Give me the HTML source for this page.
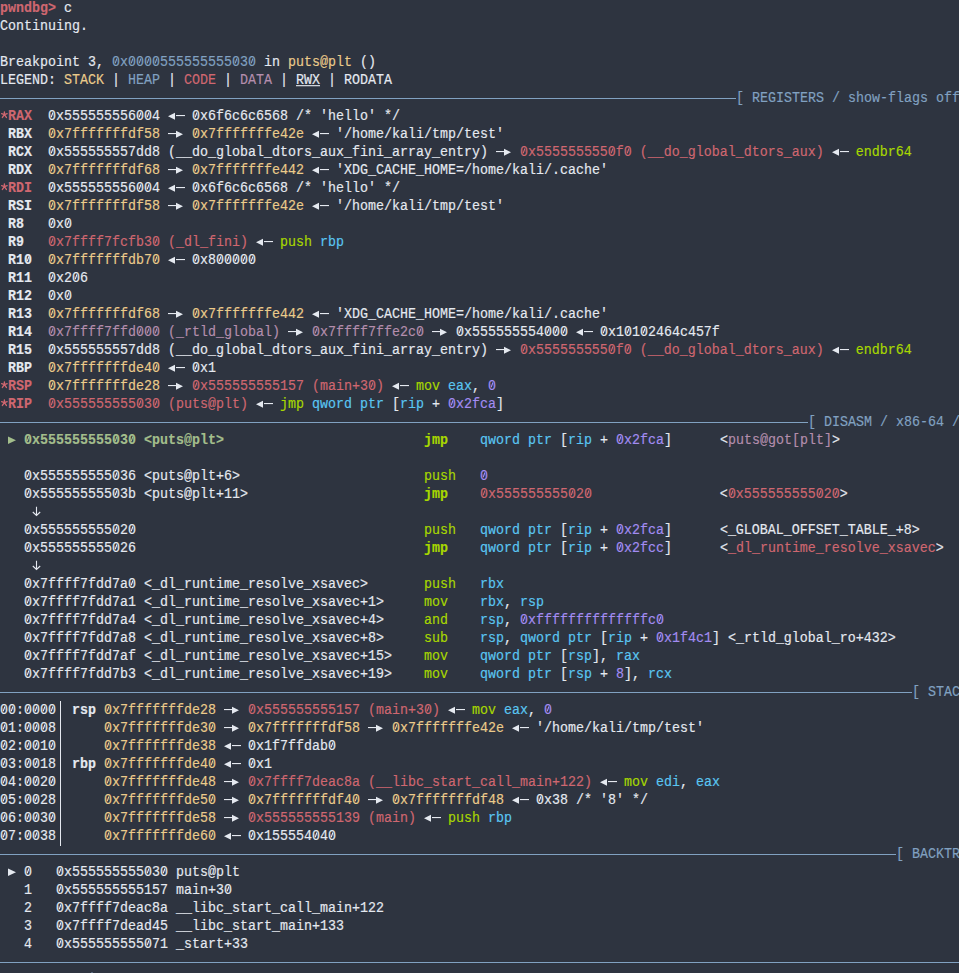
<!DOCTYPE html><html><head><meta charset="utf-8"><style>html,body{margin:0;padding:0;width:959px;height:973px;overflow:hidden;background:#2e3440;}
body{position:relative;-webkit-text-stroke:0.15px currentColor;font-family:"Liberation Mono",monospace;font-size:13.3333px;color:#e5e9f0;}
.ln{position:absolute;left:0;height:18px;line-height:18px;white-space:pre;transform:scaleY(1.12);transform-origin:0 12px;}
.ov{position:absolute;overflow:visible;}
.k{font-weight:bold}
.u{text-decoration:underline}
.hd{color:#81a1c1}
.rule{position:absolute;left:0;height:1px;background:#81a1c1;}
.vbar{position:absolute;left:60px;top:701px;width:1px;height:145px;background:#e5e9f0;}
.r{color:#cf6770}.y{color:#ebcb8b}.b{color:#81a1c1}.p{color:#b48ead}.g{color:#a3be8c}.l{color:#a8d800}.c{color:#5ac6f2}.v{color:#a38cf2}.w{color:#e5e9f0}</style></head><body><div class="ln" style="top:0px"><span class="k r">pwndbg&gt;</span> c</div>
<div class="ln" style="top:18px">Continuing.</div>
<div class="ln" style="top:54px">Breakpoint 3, <span class="b">0x0000555555555030</span> in <span class="y">puts@plt</span> ()</div>
<div class="ln" style="top:72px">LEGEND: <span class="y">STACK</span> | <span class="b">HEAP</span> | <span class="r">CODE</span> | <span class="p">DATA</span> | <span class="u">RWX</span> | RODATA</div>
<div class="ln" style="top:108px"><span class="k r"> RAX</span>  0x555555556004    0x6f6c6c6568 /* 'hello' */</div>
<div class="ln" style="top:126px"><span class="k w"> RBX</span>  <span class="y">0x7fffffffdf58</span>    <span class="y">0x7fffffffe42e</span>    '/home/kali/tmp/test'</div>
<div class="ln" style="top:144px"><span class="k w"> RCX</span>  0x555555557dd8 (__do_global_dtors_aux_fini_array_entry)    <span class="r">0x5555555550f0 (__do_global_dtors_aux)</span>    <span class="l">endbr64</span></div>
<div class="ln" style="top:162px"><span class="k w"> RDX</span>  <span class="y">0x7fffffffdf68</span>    <span class="y">0x7fffffffe442</span>    'XDG_CACHE_HOME=/home/kali/.cache'</div>
<div class="ln" style="top:180px"><span class="k r"> RDI</span>  0x555555556004    0x6f6c6c6568 /* 'hello' */</div>
<div class="ln" style="top:198px"><span class="k w"> RSI</span>  <span class="y">0x7fffffffdf58</span>    <span class="y">0x7fffffffe42e</span>    '/home/kali/tmp/test'</div>
<div class="ln" style="top:216px"><span class="k w"> R8 </span>  0x0</div>
<div class="ln" style="top:234px"><span class="k w"> R9 </span>  <span class="r">0x7ffff7fcfb30 (_dl_fini)</span>    <span class="l">push</span> <span class="c">rbp</span></div>
<div class="ln" style="top:252px"><span class="k w"> R10</span>  <span class="y">0x7fffffffdb70</span>    0x800000</div>
<div class="ln" style="top:270px"><span class="k w"> R11</span>  0x206</div>
<div class="ln" style="top:288px"><span class="k w"> R12</span>  0x0</div>
<div class="ln" style="top:306px"><span class="k w"> R13</span>  <span class="y">0x7fffffffdf68</span>    <span class="y">0x7fffffffe442</span>    'XDG_CACHE_HOME=/home/kali/.cache'</div>
<div class="ln" style="top:324px"><span class="k w"> R14</span>  <span class="p">0x7ffff7ffd000 (_rtld_global)</span>    <span class="p">0x7ffff7ffe2c0</span>    0x555555554000    0x10102464c457f</div>
<div class="ln" style="top:342px"><span class="k w"> R15</span>  0x555555557dd8 (__do_global_dtors_aux_fini_array_entry)    <span class="r">0x5555555550f0 (__do_global_dtors_aux)</span>    <span class="l">endbr64</span></div>
<div class="ln" style="top:360px"><span class="k w"> RBP</span>  <span class="y">0x7fffffffde40</span>    0x1</div>
<div class="ln" style="top:378px"><span class="k r"> RSP</span>  <span class="y">0x7fffffffde28</span>    <span class="r">0x555555555157 (main+30)</span>    <span class="l">mov</span> <span class="c">eax</span>, <span class="v">0</span></div>
<div class="ln" style="top:396px"><span class="k r"> RIP</span>  <span class="r">0x555555555030 (puts@plt)</span>    <span class="l">jmp</span> <span class="c">qword ptr</span> [<span class="c">rip</span> + <span class="v">0x2fca</span>]</div>
<div class="ln" style="top:432px"> <span class="g"> </span> <span class="k g">0x555555555030 &lt;puts@plt&gt;</span>                         <span class="k l">jmp</span>    <span class="c">qword ptr</span> [<span class="c">rip</span> + <span class="v">0x2fca</span>]      &lt;<span class="p">puts@got[plt]</span>&gt;</div>
<div class="ln" style="top:468px">   0x555555555036 &lt;puts@plt+6&gt;                       <span class="l">push</span>   <span class="v">0</span></div>
<div class="ln" style="top:486px">   0x55555555503b &lt;puts@plt+11&gt;                      <span class="k l">jmp</span>    <span class="r">0x555555555020</span>                &lt;<span class="r">0x555555555020</span>&gt;</div>
<div class="ln" style="top:504px">     </div>
<div class="ln" style="top:522px">   0x555555555020                                    <span class="l">push</span>   <span class="c">qword ptr</span> [<span class="c">rip</span> + <span class="v">0x2fca</span>]      &lt;_GLOBAL_OFFSET_TABLE_+8&gt;</div>
<div class="ln" style="top:540px">   0x555555555026                                    <span class="k l">jmp</span>    <span class="c">qword ptr</span> [<span class="c">rip</span> + <span class="v">0x2fcc</span>]      &lt;<span class="r">_dl_runtime_resolve_xsavec</span>&gt;</div>
<div class="ln" style="top:558px">     </div>
<div class="ln" style="top:576px">   0x7ffff7fdd7a0 &lt;_dl_runtime_resolve_xsavec&gt;       <span class="l">push</span>   <span class="c">rbx</span></div>
<div class="ln" style="top:594px">   0x7ffff7fdd7a1 &lt;_dl_runtime_resolve_xsavec+1&gt;     <span class="l">mov</span>    <span class="c">rbx</span>, <span class="c">rsp</span></div>
<div class="ln" style="top:612px">   0x7ffff7fdd7a4 &lt;_dl_runtime_resolve_xsavec+4&gt;     <span class="l">and</span>    <span class="c">rsp</span>, <span class="v">0xffffffffffffffc0</span></div>
<div class="ln" style="top:630px">   0x7ffff7fdd7a8 &lt;_dl_runtime_resolve_xsavec+8&gt;     <span class="l">sub</span>    <span class="c">rsp</span>, <span class="c">qword ptr</span> [<span class="c">rip</span> + <span class="v">0x1f4c1</span>] &lt;_rtld_global_ro+432&gt;</div>
<div class="ln" style="top:648px">   0x7ffff7fdd7af &lt;_dl_runtime_resolve_xsavec+15&gt;    <span class="l">mov</span>    <span class="c">qword ptr</span> [<span class="c">rsp</span>], <span class="c">rax</span></div>
<div class="ln" style="top:666px">   0x7ffff7fdd7b3 &lt;_dl_runtime_resolve_xsavec+19&gt;    <span class="l">mov</span>    <span class="c">qword ptr</span> [<span class="c">rsp</span> + <span class="v">8</span>], <span class="c">rcx</span></div>
<div class="ln" style="top:702px">00:0000  <span class="k w">rsp</span> <span class="y">0x7fffffffde28</span>    <span class="r">0x555555555157 (main+30)</span>    <span class="l">mov</span> <span class="c">eax</span>, <span class="v">0</span></div>
<div class="ln" style="top:720px">01:0008      <span class="y">0x7fffffffde30</span>    <span class="y">0x7fffffffdf58</span>    <span class="y">0x7fffffffe42e</span>    '/home/kali/tmp/test'</div>
<div class="ln" style="top:738px">02:0010      <span class="y">0x7fffffffde38</span>    0x1f7ffdab0</div>
<div class="ln" style="top:756px">03:0018  <span class="k w">rbp</span> <span class="y">0x7fffffffde40</span>    0x1</div>
<div class="ln" style="top:774px">04:0020      <span class="y">0x7fffffffde48</span>    <span class="r">0x7ffff7deac8a (__libc_start_call_main+122)</span>    <span class="l">mov</span> <span class="c">edi</span>, <span class="c">eax</span></div>
<div class="ln" style="top:792px">05:0028      <span class="y">0x7fffffffde50</span>    <span class="y">0x7fffffffdf40</span>    <span class="y">0x7fffffffdf48</span>    0x38 /* '8' */</div>
<div class="ln" style="top:810px">06:0030      <span class="y">0x7fffffffde58</span>    <span class="r">0x555555555139 (main)</span>    <span class="l">push</span> <span class="c">rbp</span></div>
<div class="ln" style="top:828px">07:0038      <span class="y">0x7fffffffde60</span>    0x155554040</div>
<div class="ln" style="top:864px">   0   0x555555555030 puts@plt</div>
<div class="ln" style="top:882px">   1   0x555555555157 main+30</div>
<div class="ln" style="top:900px">   2   0x7ffff7deac8a __libc_start_call_main+122</div>
<div class="ln" style="top:918px">   3   0x7ffff7dead45 __libc_start_main+133</div>
<div class="ln" style="top:936px">   4   0x555555555071 _start+33</div>
<div class="rule" style="top:98px;width:736px"></div>
<div class="ln hd" style="top:90px;left:736px">[ REGISTERS / show-flags off / show-compact-regs off ]</div>
<div class="rule" style="top:422px;width:808px"></div>
<div class="ln hd" style="top:414px;left:808px">[ DISASM / x86-64 / set emulate on ]</div>
<div class="rule" style="top:692px;width:912px"></div>
<div class="ln hd" style="top:684px;left:912px">[ STACK ]</div>
<div class="rule" style="top:854px;width:896px"></div>
<div class="ln hd" style="top:846px;left:896px">[ BACKTRACE ]</div>
<div class="rule" style="top:962px;width:959px"></div>
<div class="vbar"></div>
<svg class="ov" style="left:0px;top:108px" width="8" height="18" viewBox="0 0 8 18"><path d="M4.4 6.7 L4.4 3.9 M4.4 6.7 L7.15 5.65 M4.4 6.7 L1.65 5.65 M4.4 6.7 L6.4 9.45 M4.4 6.7 L2.4 9.45" stroke="#cf6770" stroke-width="1.4" stroke-linecap="round" fill="none"/></svg>
<svg class="ov" style="left:168px;top:108px" width="16" height="18" viewBox="0 0 16 18"><path d="M0 8.3 L7 4.8 L7 11.8 Z" fill="#e5e9f0"/><rect x="8" y="7.0" width="9" height="1.1" fill="#e5e9f0"/></svg>
<svg class="ov" style="left:168px;top:126px" width="16" height="18" viewBox="0 0 16 18"><rect x="0" y="7.0" width="8" height="1.1" fill="#e5e9f0"/><path d="M15 8.2 L8 4.7 L8 11.7 Z" fill="#e5e9f0"/></svg>
<svg class="ov" style="left:312px;top:126px" width="16" height="18" viewBox="0 0 16 18"><path d="M0 8.3 L7 4.8 L7 11.8 Z" fill="#e5e9f0"/><rect x="8" y="7.0" width="9" height="1.1" fill="#e5e9f0"/></svg>
<svg class="ov" style="left:496px;top:144px" width="16" height="18" viewBox="0 0 16 18"><rect x="0" y="7.0" width="8" height="1.1" fill="#e5e9f0"/><path d="M15 8.2 L8 4.7 L8 11.7 Z" fill="#e5e9f0"/></svg>
<svg class="ov" style="left:832px;top:144px" width="16" height="18" viewBox="0 0 16 18"><path d="M0 8.3 L7 4.8 L7 11.8 Z" fill="#e5e9f0"/><rect x="8" y="7.0" width="9" height="1.1" fill="#e5e9f0"/></svg>
<svg class="ov" style="left:168px;top:162px" width="16" height="18" viewBox="0 0 16 18"><rect x="0" y="7.0" width="8" height="1.1" fill="#e5e9f0"/><path d="M15 8.2 L8 4.7 L8 11.7 Z" fill="#e5e9f0"/></svg>
<svg class="ov" style="left:312px;top:162px" width="16" height="18" viewBox="0 0 16 18"><path d="M0 8.3 L7 4.8 L7 11.8 Z" fill="#e5e9f0"/><rect x="8" y="7.0" width="9" height="1.1" fill="#e5e9f0"/></svg>
<svg class="ov" style="left:0px;top:180px" width="8" height="18" viewBox="0 0 8 18"><path d="M4.4 6.7 L4.4 3.9 M4.4 6.7 L7.15 5.65 M4.4 6.7 L1.65 5.65 M4.4 6.7 L6.4 9.45 M4.4 6.7 L2.4 9.45" stroke="#cf6770" stroke-width="1.4" stroke-linecap="round" fill="none"/></svg>
<svg class="ov" style="left:168px;top:180px" width="16" height="18" viewBox="0 0 16 18"><path d="M0 8.3 L7 4.8 L7 11.8 Z" fill="#e5e9f0"/><rect x="8" y="7.0" width="9" height="1.1" fill="#e5e9f0"/></svg>
<svg class="ov" style="left:168px;top:198px" width="16" height="18" viewBox="0 0 16 18"><rect x="0" y="7.0" width="8" height="1.1" fill="#e5e9f0"/><path d="M15 8.2 L8 4.7 L8 11.7 Z" fill="#e5e9f0"/></svg>
<svg class="ov" style="left:312px;top:198px" width="16" height="18" viewBox="0 0 16 18"><path d="M0 8.3 L7 4.8 L7 11.8 Z" fill="#e5e9f0"/><rect x="8" y="7.0" width="9" height="1.1" fill="#e5e9f0"/></svg>
<svg class="ov" style="left:256px;top:234px" width="16" height="18" viewBox="0 0 16 18"><path d="M0 8.3 L7 4.8 L7 11.8 Z" fill="#e5e9f0"/><rect x="8" y="7.0" width="9" height="1.1" fill="#e5e9f0"/></svg>
<svg class="ov" style="left:168px;top:252px" width="16" height="18" viewBox="0 0 16 18"><path d="M0 8.3 L7 4.8 L7 11.8 Z" fill="#e5e9f0"/><rect x="8" y="7.0" width="9" height="1.1" fill="#e5e9f0"/></svg>
<svg class="ov" style="left:168px;top:306px" width="16" height="18" viewBox="0 0 16 18"><rect x="0" y="7.0" width="8" height="1.1" fill="#e5e9f0"/><path d="M15 8.2 L8 4.7 L8 11.7 Z" fill="#e5e9f0"/></svg>
<svg class="ov" style="left:312px;top:306px" width="16" height="18" viewBox="0 0 16 18"><path d="M0 8.3 L7 4.8 L7 11.8 Z" fill="#e5e9f0"/><rect x="8" y="7.0" width="9" height="1.1" fill="#e5e9f0"/></svg>
<svg class="ov" style="left:288px;top:324px" width="16" height="18" viewBox="0 0 16 18"><rect x="0" y="7.0" width="8" height="1.1" fill="#e5e9f0"/><path d="M15 8.2 L8 4.7 L8 11.7 Z" fill="#e5e9f0"/></svg>
<svg class="ov" style="left:432px;top:324px" width="16" height="18" viewBox="0 0 16 18"><rect x="0" y="7.0" width="8" height="1.1" fill="#e5e9f0"/><path d="M15 8.2 L8 4.7 L8 11.7 Z" fill="#e5e9f0"/></svg>
<svg class="ov" style="left:576px;top:324px" width="16" height="18" viewBox="0 0 16 18"><path d="M0 8.3 L7 4.8 L7 11.8 Z" fill="#e5e9f0"/><rect x="8" y="7.0" width="9" height="1.1" fill="#e5e9f0"/></svg>
<svg class="ov" style="left:496px;top:342px" width="16" height="18" viewBox="0 0 16 18"><rect x="0" y="7.0" width="8" height="1.1" fill="#e5e9f0"/><path d="M15 8.2 L8 4.7 L8 11.7 Z" fill="#e5e9f0"/></svg>
<svg class="ov" style="left:832px;top:342px" width="16" height="18" viewBox="0 0 16 18"><path d="M0 8.3 L7 4.8 L7 11.8 Z" fill="#e5e9f0"/><rect x="8" y="7.0" width="9" height="1.1" fill="#e5e9f0"/></svg>
<svg class="ov" style="left:168px;top:360px" width="16" height="18" viewBox="0 0 16 18"><path d="M0 8.3 L7 4.8 L7 11.8 Z" fill="#e5e9f0"/><rect x="8" y="7.0" width="9" height="1.1" fill="#e5e9f0"/></svg>
<svg class="ov" style="left:0px;top:378px" width="8" height="18" viewBox="0 0 8 18"><path d="M4.4 6.7 L4.4 3.9 M4.4 6.7 L7.15 5.65 M4.4 6.7 L1.65 5.65 M4.4 6.7 L6.4 9.45 M4.4 6.7 L2.4 9.45" stroke="#cf6770" stroke-width="1.4" stroke-linecap="round" fill="none"/></svg>
<svg class="ov" style="left:168px;top:378px" width="16" height="18" viewBox="0 0 16 18"><rect x="0" y="7.0" width="8" height="1.1" fill="#e5e9f0"/><path d="M15 8.2 L8 4.7 L8 11.7 Z" fill="#e5e9f0"/></svg>
<svg class="ov" style="left:392px;top:378px" width="16" height="18" viewBox="0 0 16 18"><path d="M0 8.3 L7 4.8 L7 11.8 Z" fill="#e5e9f0"/><rect x="8" y="7.0" width="9" height="1.1" fill="#e5e9f0"/></svg>
<svg class="ov" style="left:0px;top:396px" width="8" height="18" viewBox="0 0 8 18"><path d="M4.4 6.7 L4.4 3.9 M4.4 6.7 L7.15 5.65 M4.4 6.7 L1.65 5.65 M4.4 6.7 L6.4 9.45 M4.4 6.7 L2.4 9.45" stroke="#cf6770" stroke-width="1.4" stroke-linecap="round" fill="none"/></svg>
<svg class="ov" style="left:256px;top:396px" width="16" height="18" viewBox="0 0 16 18"><path d="M0 8.3 L7 4.8 L7 11.8 Z" fill="#e5e9f0"/><rect x="8" y="7.0" width="9" height="1.1" fill="#e5e9f0"/></svg>
<svg class="ov" style="left:8px;top:432px" width="8" height="18" viewBox="0 0 8 18"><path d="M0 4.5 L8 8.25 L0 12 Z" fill="#a3be8c"/></svg>
<svg class="ov" style="left:32px;top:504px" width="8" height="18" viewBox="0 0 8 18"><path d="M4.5 2.7 V11.2 M0.8 8.0 L4.5 11.4 L8.2 8.0" stroke="#e5e9f0" stroke-width="1.1" fill="none"/></svg>
<svg class="ov" style="left:32px;top:558px" width="8" height="18" viewBox="0 0 8 18"><path d="M4.5 2.7 V11.2 M0.8 8.0 L4.5 11.4 L8.2 8.0" stroke="#e5e9f0" stroke-width="1.1" fill="none"/></svg>
<svg class="ov" style="left:224px;top:702px" width="16" height="18" viewBox="0 0 16 18"><rect x="0" y="7.0" width="8" height="1.1" fill="#e5e9f0"/><path d="M15 8.2 L8 4.7 L8 11.7 Z" fill="#e5e9f0"/></svg>
<svg class="ov" style="left:448px;top:702px" width="16" height="18" viewBox="0 0 16 18"><path d="M0 8.3 L7 4.8 L7 11.8 Z" fill="#e5e9f0"/><rect x="8" y="7.0" width="9" height="1.1" fill="#e5e9f0"/></svg>
<svg class="ov" style="left:224px;top:720px" width="16" height="18" viewBox="0 0 16 18"><rect x="0" y="7.0" width="8" height="1.1" fill="#e5e9f0"/><path d="M15 8.2 L8 4.7 L8 11.7 Z" fill="#e5e9f0"/></svg>
<svg class="ov" style="left:368px;top:720px" width="16" height="18" viewBox="0 0 16 18"><rect x="0" y="7.0" width="8" height="1.1" fill="#e5e9f0"/><path d="M15 8.2 L8 4.7 L8 11.7 Z" fill="#e5e9f0"/></svg>
<svg class="ov" style="left:512px;top:720px" width="16" height="18" viewBox="0 0 16 18"><path d="M0 8.3 L7 4.8 L7 11.8 Z" fill="#e5e9f0"/><rect x="8" y="7.0" width="9" height="1.1" fill="#e5e9f0"/></svg>
<svg class="ov" style="left:224px;top:738px" width="16" height="18" viewBox="0 0 16 18"><path d="M0 8.3 L7 4.8 L7 11.8 Z" fill="#e5e9f0"/><rect x="8" y="7.0" width="9" height="1.1" fill="#e5e9f0"/></svg>
<svg class="ov" style="left:224px;top:756px" width="16" height="18" viewBox="0 0 16 18"><path d="M0 8.3 L7 4.8 L7 11.8 Z" fill="#e5e9f0"/><rect x="8" y="7.0" width="9" height="1.1" fill="#e5e9f0"/></svg>
<svg class="ov" style="left:224px;top:774px" width="16" height="18" viewBox="0 0 16 18"><rect x="0" y="7.0" width="8" height="1.1" fill="#e5e9f0"/><path d="M15 8.2 L8 4.7 L8 11.7 Z" fill="#e5e9f0"/></svg>
<svg class="ov" style="left:600px;top:774px" width="16" height="18" viewBox="0 0 16 18"><path d="M0 8.3 L7 4.8 L7 11.8 Z" fill="#e5e9f0"/><rect x="8" y="7.0" width="9" height="1.1" fill="#e5e9f0"/></svg>
<svg class="ov" style="left:224px;top:792px" width="16" height="18" viewBox="0 0 16 18"><rect x="0" y="7.0" width="8" height="1.1" fill="#e5e9f0"/><path d="M15 8.2 L8 4.7 L8 11.7 Z" fill="#e5e9f0"/></svg>
<svg class="ov" style="left:368px;top:792px" width="16" height="18" viewBox="0 0 16 18"><rect x="0" y="7.0" width="8" height="1.1" fill="#e5e9f0"/><path d="M15 8.2 L8 4.7 L8 11.7 Z" fill="#e5e9f0"/></svg>
<svg class="ov" style="left:512px;top:792px" width="16" height="18" viewBox="0 0 16 18"><path d="M0 8.3 L7 4.8 L7 11.8 Z" fill="#e5e9f0"/><rect x="8" y="7.0" width="9" height="1.1" fill="#e5e9f0"/></svg>
<svg class="ov" style="left:224px;top:810px" width="16" height="18" viewBox="0 0 16 18"><rect x="0" y="7.0" width="8" height="1.1" fill="#e5e9f0"/><path d="M15 8.2 L8 4.7 L8 11.7 Z" fill="#e5e9f0"/></svg>
<svg class="ov" style="left:424px;top:810px" width="16" height="18" viewBox="0 0 16 18"><path d="M0 8.3 L7 4.8 L7 11.8 Z" fill="#e5e9f0"/><rect x="8" y="7.0" width="9" height="1.1" fill="#e5e9f0"/></svg>
<svg class="ov" style="left:224px;top:828px" width="16" height="18" viewBox="0 0 16 18"><path d="M0 8.3 L7 4.8 L7 11.8 Z" fill="#e5e9f0"/><rect x="8" y="7.0" width="9" height="1.1" fill="#e5e9f0"/></svg>
<svg class="ov" style="left:8px;top:864px" width="8" height="18" viewBox="0 0 8 18"><path d="M0 4.5 L8 8.25 L0 12 Z" fill="#e5e9f0"/></svg>
<svg class="ov" style="left:112px;top:54px" width="8" height="18" viewBox="0 0 8 18"><rect x="3" y="6" width="2" height="2" fill="#2e3440"/><path d="M3.2 9.2 L4.9 4.5" stroke="#81a1c1" stroke-width="1.15" fill="none"/></svg>
<svg class="ov" style="left:128px;top:54px" width="8" height="18" viewBox="0 0 8 18"><rect x="3" y="6" width="2" height="2" fill="#2e3440"/><path d="M3.2 9.2 L4.9 4.5" stroke="#81a1c1" stroke-width="1.15" fill="none"/></svg>
<svg class="ov" style="left:136px;top:54px" width="8" height="18" viewBox="0 0 8 18"><rect x="3" y="6" width="2" height="2" fill="#2e3440"/><path d="M3.2 9.2 L4.9 4.5" stroke="#81a1c1" stroke-width="1.15" fill="none"/></svg>
<svg class="ov" style="left:144px;top:54px" width="8" height="18" viewBox="0 0 8 18"><rect x="3" y="6" width="2" height="2" fill="#2e3440"/><path d="M3.2 9.2 L4.9 4.5" stroke="#81a1c1" stroke-width="1.15" fill="none"/></svg>
<svg class="ov" style="left:152px;top:54px" width="8" height="18" viewBox="0 0 8 18"><rect x="3" y="6" width="2" height="2" fill="#2e3440"/><path d="M3.2 9.2 L4.9 4.5" stroke="#81a1c1" stroke-width="1.15" fill="none"/></svg>
<svg class="ov" style="left:232px;top:54px" width="8" height="18" viewBox="0 0 8 18"><rect x="3" y="6" width="2" height="2" fill="#2e3440"/><path d="M3.2 9.2 L4.9 4.5" stroke="#81a1c1" stroke-width="1.15" fill="none"/></svg>
<svg class="ov" style="left:248px;top:54px" width="8" height="18" viewBox="0 0 8 18"><rect x="3" y="6" width="2" height="2" fill="#2e3440"/><path d="M3.2 9.2 L4.9 4.5" stroke="#81a1c1" stroke-width="1.15" fill="none"/></svg>
<svg class="ov" style="left:48px;top:108px" width="8" height="18" viewBox="0 0 8 18"><rect x="3" y="6" width="2" height="2" fill="#2e3440"/><path d="M3.2 9.2 L4.9 4.5" stroke="#e5e9f0" stroke-width="1.15" fill="none"/></svg>
<svg class="ov" style="left:136px;top:108px" width="8" height="18" viewBox="0 0 8 18"><rect x="3" y="6" width="2" height="2" fill="#2e3440"/><path d="M3.2 9.2 L4.9 4.5" stroke="#e5e9f0" stroke-width="1.15" fill="none"/></svg>
<svg class="ov" style="left:144px;top:108px" width="8" height="18" viewBox="0 0 8 18"><rect x="3" y="6" width="2" height="2" fill="#2e3440"/><path d="M3.2 9.2 L4.9 4.5" stroke="#e5e9f0" stroke-width="1.15" fill="none"/></svg>
<svg class="ov" style="left:192px;top:108px" width="8" height="18" viewBox="0 0 8 18"><rect x="3" y="6" width="2" height="2" fill="#2e3440"/><path d="M3.2 9.2 L4.9 4.5" stroke="#e5e9f0" stroke-width="1.15" fill="none"/></svg>
<svg class="ov" style="left:48px;top:126px" width="8" height="18" viewBox="0 0 8 18"><rect x="3" y="6" width="2" height="2" fill="#2e3440"/><path d="M3.2 9.2 L4.9 4.5" stroke="#ebcb8b" stroke-width="1.15" fill="none"/></svg>
<svg class="ov" style="left:192px;top:126px" width="8" height="18" viewBox="0 0 8 18"><rect x="3" y="6" width="2" height="2" fill="#2e3440"/><path d="M3.2 9.2 L4.9 4.5" stroke="#ebcb8b" stroke-width="1.15" fill="none"/></svg>
<svg class="ov" style="left:48px;top:144px" width="8" height="18" viewBox="0 0 8 18"><rect x="3" y="6" width="2" height="2" fill="#2e3440"/><path d="M3.2 9.2 L4.9 4.5" stroke="#e5e9f0" stroke-width="1.15" fill="none"/></svg>
<svg class="ov" style="left:520px;top:144px" width="8" height="18" viewBox="0 0 8 18"><rect x="3" y="6" width="2" height="2" fill="#2e3440"/><path d="M3.2 9.2 L4.9 4.5" stroke="#cf6770" stroke-width="1.15" fill="none"/></svg>
<svg class="ov" style="left:608px;top:144px" width="8" height="18" viewBox="0 0 8 18"><rect x="3" y="6" width="2" height="2" fill="#2e3440"/><path d="M3.2 9.2 L4.9 4.5" stroke="#cf6770" stroke-width="1.15" fill="none"/></svg>
<svg class="ov" style="left:624px;top:144px" width="8" height="18" viewBox="0 0 8 18"><rect x="3" y="6" width="2" height="2" fill="#2e3440"/><path d="M3.2 9.2 L4.9 4.5" stroke="#cf6770" stroke-width="1.15" fill="none"/></svg>
<svg class="ov" style="left:48px;top:162px" width="8" height="18" viewBox="0 0 8 18"><rect x="3" y="6" width="2" height="2" fill="#2e3440"/><path d="M3.2 9.2 L4.9 4.5" stroke="#ebcb8b" stroke-width="1.15" fill="none"/></svg>
<svg class="ov" style="left:192px;top:162px" width="8" height="18" viewBox="0 0 8 18"><rect x="3" y="6" width="2" height="2" fill="#2e3440"/><path d="M3.2 9.2 L4.9 4.5" stroke="#ebcb8b" stroke-width="1.15" fill="none"/></svg>
<svg class="ov" style="left:48px;top:180px" width="8" height="18" viewBox="0 0 8 18"><rect x="3" y="6" width="2" height="2" fill="#2e3440"/><path d="M3.2 9.2 L4.9 4.5" stroke="#e5e9f0" stroke-width="1.15" fill="none"/></svg>
<svg class="ov" style="left:136px;top:180px" width="8" height="18" viewBox="0 0 8 18"><rect x="3" y="6" width="2" height="2" fill="#2e3440"/><path d="M3.2 9.2 L4.9 4.5" stroke="#e5e9f0" stroke-width="1.15" fill="none"/></svg>
<svg class="ov" style="left:144px;top:180px" width="8" height="18" viewBox="0 0 8 18"><rect x="3" y="6" width="2" height="2" fill="#2e3440"/><path d="M3.2 9.2 L4.9 4.5" stroke="#e5e9f0" stroke-width="1.15" fill="none"/></svg>
<svg class="ov" style="left:192px;top:180px" width="8" height="18" viewBox="0 0 8 18"><rect x="3" y="6" width="2" height="2" fill="#2e3440"/><path d="M3.2 9.2 L4.9 4.5" stroke="#e5e9f0" stroke-width="1.15" fill="none"/></svg>
<svg class="ov" style="left:48px;top:198px" width="8" height="18" viewBox="0 0 8 18"><rect x="3" y="6" width="2" height="2" fill="#2e3440"/><path d="M3.2 9.2 L4.9 4.5" stroke="#ebcb8b" stroke-width="1.15" fill="none"/></svg>
<svg class="ov" style="left:192px;top:198px" width="8" height="18" viewBox="0 0 8 18"><rect x="3" y="6" width="2" height="2" fill="#2e3440"/><path d="M3.2 9.2 L4.9 4.5" stroke="#ebcb8b" stroke-width="1.15" fill="none"/></svg>
<svg class="ov" style="left:48px;top:216px" width="8" height="18" viewBox="0 0 8 18"><rect x="3" y="6" width="2" height="2" fill="#2e3440"/><path d="M3.2 9.2 L4.9 4.5" stroke="#e5e9f0" stroke-width="1.15" fill="none"/></svg>
<svg class="ov" style="left:64px;top:216px" width="8" height="18" viewBox="0 0 8 18"><rect x="3" y="6" width="2" height="2" fill="#2e3440"/><path d="M3.2 9.2 L4.9 4.5" stroke="#e5e9f0" stroke-width="1.15" fill="none"/></svg>
<svg class="ov" style="left:48px;top:234px" width="8" height="18" viewBox="0 0 8 18"><rect x="3" y="6" width="2" height="2" fill="#2e3440"/><path d="M3.2 9.2 L4.9 4.5" stroke="#cf6770" stroke-width="1.15" fill="none"/></svg>
<svg class="ov" style="left:152px;top:234px" width="8" height="18" viewBox="0 0 8 18"><rect x="3" y="6" width="2" height="2" fill="#2e3440"/><path d="M3.2 9.2 L4.9 4.5" stroke="#cf6770" stroke-width="1.15" fill="none"/></svg>
<svg class="ov" style="left:24px;top:252px" width="8" height="18" viewBox="0 0 8 18"><rect x="3" y="6" width="2" height="2" fill="#2e3440"/><path d="M3.2 9.2 L4.9 4.5" stroke="#e5e9f0" stroke-width="1.15" fill="none"/></svg>
<svg class="ov" style="left:48px;top:252px" width="8" height="18" viewBox="0 0 8 18"><rect x="3" y="6" width="2" height="2" fill="#2e3440"/><path d="M3.2 9.2 L4.9 4.5" stroke="#ebcb8b" stroke-width="1.15" fill="none"/></svg>
<svg class="ov" style="left:152px;top:252px" width="8" height="18" viewBox="0 0 8 18"><rect x="3" y="6" width="2" height="2" fill="#2e3440"/><path d="M3.2 9.2 L4.9 4.5" stroke="#ebcb8b" stroke-width="1.15" fill="none"/></svg>
<svg class="ov" style="left:192px;top:252px" width="8" height="18" viewBox="0 0 8 18"><rect x="3" y="6" width="2" height="2" fill="#2e3440"/><path d="M3.2 9.2 L4.9 4.5" stroke="#e5e9f0" stroke-width="1.15" fill="none"/></svg>
<svg class="ov" style="left:216px;top:252px" width="8" height="18" viewBox="0 0 8 18"><rect x="3" y="6" width="2" height="2" fill="#2e3440"/><path d="M3.2 9.2 L4.9 4.5" stroke="#e5e9f0" stroke-width="1.15" fill="none"/></svg>
<svg class="ov" style="left:224px;top:252px" width="8" height="18" viewBox="0 0 8 18"><rect x="3" y="6" width="2" height="2" fill="#2e3440"/><path d="M3.2 9.2 L4.9 4.5" stroke="#e5e9f0" stroke-width="1.15" fill="none"/></svg>
<svg class="ov" style="left:232px;top:252px" width="8" height="18" viewBox="0 0 8 18"><rect x="3" y="6" width="2" height="2" fill="#2e3440"/><path d="M3.2 9.2 L4.9 4.5" stroke="#e5e9f0" stroke-width="1.15" fill="none"/></svg>
<svg class="ov" style="left:240px;top:252px" width="8" height="18" viewBox="0 0 8 18"><rect x="3" y="6" width="2" height="2" fill="#2e3440"/><path d="M3.2 9.2 L4.9 4.5" stroke="#e5e9f0" stroke-width="1.15" fill="none"/></svg>
<svg class="ov" style="left:248px;top:252px" width="8" height="18" viewBox="0 0 8 18"><rect x="3" y="6" width="2" height="2" fill="#2e3440"/><path d="M3.2 9.2 L4.9 4.5" stroke="#e5e9f0" stroke-width="1.15" fill="none"/></svg>
<svg class="ov" style="left:48px;top:270px" width="8" height="18" viewBox="0 0 8 18"><rect x="3" y="6" width="2" height="2" fill="#2e3440"/><path d="M3.2 9.2 L4.9 4.5" stroke="#e5e9f0" stroke-width="1.15" fill="none"/></svg>
<svg class="ov" style="left:72px;top:270px" width="8" height="18" viewBox="0 0 8 18"><rect x="3" y="6" width="2" height="2" fill="#2e3440"/><path d="M3.2 9.2 L4.9 4.5" stroke="#e5e9f0" stroke-width="1.15" fill="none"/></svg>
<svg class="ov" style="left:48px;top:288px" width="8" height="18" viewBox="0 0 8 18"><rect x="3" y="6" width="2" height="2" fill="#2e3440"/><path d="M3.2 9.2 L4.9 4.5" stroke="#e5e9f0" stroke-width="1.15" fill="none"/></svg>
<svg class="ov" style="left:64px;top:288px" width="8" height="18" viewBox="0 0 8 18"><rect x="3" y="6" width="2" height="2" fill="#2e3440"/><path d="M3.2 9.2 L4.9 4.5" stroke="#e5e9f0" stroke-width="1.15" fill="none"/></svg>
<svg class="ov" style="left:48px;top:306px" width="8" height="18" viewBox="0 0 8 18"><rect x="3" y="6" width="2" height="2" fill="#2e3440"/><path d="M3.2 9.2 L4.9 4.5" stroke="#ebcb8b" stroke-width="1.15" fill="none"/></svg>
<svg class="ov" style="left:192px;top:306px" width="8" height="18" viewBox="0 0 8 18"><rect x="3" y="6" width="2" height="2" fill="#2e3440"/><path d="M3.2 9.2 L4.9 4.5" stroke="#ebcb8b" stroke-width="1.15" fill="none"/></svg>
<svg class="ov" style="left:48px;top:324px" width="8" height="18" viewBox="0 0 8 18"><rect x="3" y="6" width="2" height="2" fill="#2e3440"/><path d="M3.2 9.2 L4.9 4.5" stroke="#b48ead" stroke-width="1.15" fill="none"/></svg>
<svg class="ov" style="left:136px;top:324px" width="8" height="18" viewBox="0 0 8 18"><rect x="3" y="6" width="2" height="2" fill="#2e3440"/><path d="M3.2 9.2 L4.9 4.5" stroke="#b48ead" stroke-width="1.15" fill="none"/></svg>
<svg class="ov" style="left:144px;top:324px" width="8" height="18" viewBox="0 0 8 18"><rect x="3" y="6" width="2" height="2" fill="#2e3440"/><path d="M3.2 9.2 L4.9 4.5" stroke="#b48ead" stroke-width="1.15" fill="none"/></svg>
<svg class="ov" style="left:152px;top:324px" width="8" height="18" viewBox="0 0 8 18"><rect x="3" y="6" width="2" height="2" fill="#2e3440"/><path d="M3.2 9.2 L4.9 4.5" stroke="#b48ead" stroke-width="1.15" fill="none"/></svg>
<svg class="ov" style="left:312px;top:324px" width="8" height="18" viewBox="0 0 8 18"><rect x="3" y="6" width="2" height="2" fill="#2e3440"/><path d="M3.2 9.2 L4.9 4.5" stroke="#b48ead" stroke-width="1.15" fill="none"/></svg>
<svg class="ov" style="left:416px;top:324px" width="8" height="18" viewBox="0 0 8 18"><rect x="3" y="6" width="2" height="2" fill="#2e3440"/><path d="M3.2 9.2 L4.9 4.5" stroke="#b48ead" stroke-width="1.15" fill="none"/></svg>
<svg class="ov" style="left:456px;top:324px" width="8" height="18" viewBox="0 0 8 18"><rect x="3" y="6" width="2" height="2" fill="#2e3440"/><path d="M3.2 9.2 L4.9 4.5" stroke="#e5e9f0" stroke-width="1.15" fill="none"/></svg>
<svg class="ov" style="left:544px;top:324px" width="8" height="18" viewBox="0 0 8 18"><rect x="3" y="6" width="2" height="2" fill="#2e3440"/><path d="M3.2 9.2 L4.9 4.5" stroke="#e5e9f0" stroke-width="1.15" fill="none"/></svg>
<svg class="ov" style="left:552px;top:324px" width="8" height="18" viewBox="0 0 8 18"><rect x="3" y="6" width="2" height="2" fill="#2e3440"/><path d="M3.2 9.2 L4.9 4.5" stroke="#e5e9f0" stroke-width="1.15" fill="none"/></svg>
<svg class="ov" style="left:560px;top:324px" width="8" height="18" viewBox="0 0 8 18"><rect x="3" y="6" width="2" height="2" fill="#2e3440"/><path d="M3.2 9.2 L4.9 4.5" stroke="#e5e9f0" stroke-width="1.15" fill="none"/></svg>
<svg class="ov" style="left:600px;top:324px" width="8" height="18" viewBox="0 0 8 18"><rect x="3" y="6" width="2" height="2" fill="#2e3440"/><path d="M3.2 9.2 L4.9 4.5" stroke="#e5e9f0" stroke-width="1.15" fill="none"/></svg>
<svg class="ov" style="left:624px;top:324px" width="8" height="18" viewBox="0 0 8 18"><rect x="3" y="6" width="2" height="2" fill="#2e3440"/><path d="M3.2 9.2 L4.9 4.5" stroke="#e5e9f0" stroke-width="1.15" fill="none"/></svg>
<svg class="ov" style="left:640px;top:324px" width="8" height="18" viewBox="0 0 8 18"><rect x="3" y="6" width="2" height="2" fill="#2e3440"/><path d="M3.2 9.2 L4.9 4.5" stroke="#e5e9f0" stroke-width="1.15" fill="none"/></svg>
<svg class="ov" style="left:48px;top:342px" width="8" height="18" viewBox="0 0 8 18"><rect x="3" y="6" width="2" height="2" fill="#2e3440"/><path d="M3.2 9.2 L4.9 4.5" stroke="#e5e9f0" stroke-width="1.15" fill="none"/></svg>
<svg class="ov" style="left:520px;top:342px" width="8" height="18" viewBox="0 0 8 18"><rect x="3" y="6" width="2" height="2" fill="#2e3440"/><path d="M3.2 9.2 L4.9 4.5" stroke="#cf6770" stroke-width="1.15" fill="none"/></svg>
<svg class="ov" style="left:608px;top:342px" width="8" height="18" viewBox="0 0 8 18"><rect x="3" y="6" width="2" height="2" fill="#2e3440"/><path d="M3.2 9.2 L4.9 4.5" stroke="#cf6770" stroke-width="1.15" fill="none"/></svg>
<svg class="ov" style="left:624px;top:342px" width="8" height="18" viewBox="0 0 8 18"><rect x="3" y="6" width="2" height="2" fill="#2e3440"/><path d="M3.2 9.2 L4.9 4.5" stroke="#cf6770" stroke-width="1.15" fill="none"/></svg>
<svg class="ov" style="left:48px;top:360px" width="8" height="18" viewBox="0 0 8 18"><rect x="3" y="6" width="2" height="2" fill="#2e3440"/><path d="M3.2 9.2 L4.9 4.5" stroke="#ebcb8b" stroke-width="1.15" fill="none"/></svg>
<svg class="ov" style="left:152px;top:360px" width="8" height="18" viewBox="0 0 8 18"><rect x="3" y="6" width="2" height="2" fill="#2e3440"/><path d="M3.2 9.2 L4.9 4.5" stroke="#ebcb8b" stroke-width="1.15" fill="none"/></svg>
<svg class="ov" style="left:192px;top:360px" width="8" height="18" viewBox="0 0 8 18"><rect x="3" y="6" width="2" height="2" fill="#2e3440"/><path d="M3.2 9.2 L4.9 4.5" stroke="#e5e9f0" stroke-width="1.15" fill="none"/></svg>
<svg class="ov" style="left:48px;top:378px" width="8" height="18" viewBox="0 0 8 18"><rect x="3" y="6" width="2" height="2" fill="#2e3440"/><path d="M3.2 9.2 L4.9 4.5" stroke="#ebcb8b" stroke-width="1.15" fill="none"/></svg>
<svg class="ov" style="left:192px;top:378px" width="8" height="18" viewBox="0 0 8 18"><rect x="3" y="6" width="2" height="2" fill="#2e3440"/><path d="M3.2 9.2 L4.9 4.5" stroke="#cf6770" stroke-width="1.15" fill="none"/></svg>
<svg class="ov" style="left:368px;top:378px" width="8" height="18" viewBox="0 0 8 18"><rect x="3" y="6" width="2" height="2" fill="#2e3440"/><path d="M3.2 9.2 L4.9 4.5" stroke="#cf6770" stroke-width="1.15" fill="none"/></svg>
<svg class="ov" style="left:488px;top:378px" width="8" height="18" viewBox="0 0 8 18"><rect x="3" y="6" width="2" height="2" fill="#2e3440"/><path d="M3.2 9.2 L4.9 4.5" stroke="#a38cf2" stroke-width="1.15" fill="none"/></svg>
<svg class="ov" style="left:48px;top:396px" width="8" height="18" viewBox="0 0 8 18"><rect x="3" y="6" width="2" height="2" fill="#2e3440"/><path d="M3.2 9.2 L4.9 4.5" stroke="#cf6770" stroke-width="1.15" fill="none"/></svg>
<svg class="ov" style="left:136px;top:396px" width="8" height="18" viewBox="0 0 8 18"><rect x="3" y="6" width="2" height="2" fill="#2e3440"/><path d="M3.2 9.2 L4.9 4.5" stroke="#cf6770" stroke-width="1.15" fill="none"/></svg>
<svg class="ov" style="left:152px;top:396px" width="8" height="18" viewBox="0 0 8 18"><rect x="3" y="6" width="2" height="2" fill="#2e3440"/><path d="M3.2 9.2 L4.9 4.5" stroke="#cf6770" stroke-width="1.15" fill="none"/></svg>
<svg class="ov" style="left:448px;top:396px" width="8" height="18" viewBox="0 0 8 18"><rect x="3" y="6" width="2" height="2" fill="#2e3440"/><path d="M3.2 9.2 L4.9 4.5" stroke="#a38cf2" stroke-width="1.15" fill="none"/></svg>
<svg class="ov" style="left:24px;top:432px" width="8" height="18" viewBox="0 0 8 18"><rect x="3" y="6" width="2" height="2" fill="#2e3440"/><path d="M3.2 9.2 L4.9 4.5" stroke="#a3be8c" stroke-width="1.15" fill="none"/></svg>
<svg class="ov" style="left:112px;top:432px" width="8" height="18" viewBox="0 0 8 18"><rect x="3" y="6" width="2" height="2" fill="#2e3440"/><path d="M3.2 9.2 L4.9 4.5" stroke="#a3be8c" stroke-width="1.15" fill="none"/></svg>
<svg class="ov" style="left:128px;top:432px" width="8" height="18" viewBox="0 0 8 18"><rect x="3" y="6" width="2" height="2" fill="#2e3440"/><path d="M3.2 9.2 L4.9 4.5" stroke="#a3be8c" stroke-width="1.15" fill="none"/></svg>
<svg class="ov" style="left:616px;top:432px" width="8" height="18" viewBox="0 0 8 18"><rect x="3" y="6" width="2" height="2" fill="#2e3440"/><path d="M3.2 9.2 L4.9 4.5" stroke="#a38cf2" stroke-width="1.15" fill="none"/></svg>
<svg class="ov" style="left:24px;top:468px" width="8" height="18" viewBox="0 0 8 18"><rect x="3" y="6" width="2" height="2" fill="#2e3440"/><path d="M3.2 9.2 L4.9 4.5" stroke="#e5e9f0" stroke-width="1.15" fill="none"/></svg>
<svg class="ov" style="left:112px;top:468px" width="8" height="18" viewBox="0 0 8 18"><rect x="3" y="6" width="2" height="2" fill="#2e3440"/><path d="M3.2 9.2 L4.9 4.5" stroke="#e5e9f0" stroke-width="1.15" fill="none"/></svg>
<svg class="ov" style="left:480px;top:468px" width="8" height="18" viewBox="0 0 8 18"><rect x="3" y="6" width="2" height="2" fill="#2e3440"/><path d="M3.2 9.2 L4.9 4.5" stroke="#a38cf2" stroke-width="1.15" fill="none"/></svg>
<svg class="ov" style="left:24px;top:486px" width="8" height="18" viewBox="0 0 8 18"><rect x="3" y="6" width="2" height="2" fill="#2e3440"/><path d="M3.2 9.2 L4.9 4.5" stroke="#e5e9f0" stroke-width="1.15" fill="none"/></svg>
<svg class="ov" style="left:112px;top:486px" width="8" height="18" viewBox="0 0 8 18"><rect x="3" y="6" width="2" height="2" fill="#2e3440"/><path d="M3.2 9.2 L4.9 4.5" stroke="#e5e9f0" stroke-width="1.15" fill="none"/></svg>
<svg class="ov" style="left:480px;top:486px" width="8" height="18" viewBox="0 0 8 18"><rect x="3" y="6" width="2" height="2" fill="#2e3440"/><path d="M3.2 9.2 L4.9 4.5" stroke="#cf6770" stroke-width="1.15" fill="none"/></svg>
<svg class="ov" style="left:568px;top:486px" width="8" height="18" viewBox="0 0 8 18"><rect x="3" y="6" width="2" height="2" fill="#2e3440"/><path d="M3.2 9.2 L4.9 4.5" stroke="#cf6770" stroke-width="1.15" fill="none"/></svg>
<svg class="ov" style="left:584px;top:486px" width="8" height="18" viewBox="0 0 8 18"><rect x="3" y="6" width="2" height="2" fill="#2e3440"/><path d="M3.2 9.2 L4.9 4.5" stroke="#cf6770" stroke-width="1.15" fill="none"/></svg>
<svg class="ov" style="left:728px;top:486px" width="8" height="18" viewBox="0 0 8 18"><rect x="3" y="6" width="2" height="2" fill="#2e3440"/><path d="M3.2 9.2 L4.9 4.5" stroke="#cf6770" stroke-width="1.15" fill="none"/></svg>
<svg class="ov" style="left:816px;top:486px" width="8" height="18" viewBox="0 0 8 18"><rect x="3" y="6" width="2" height="2" fill="#2e3440"/><path d="M3.2 9.2 L4.9 4.5" stroke="#cf6770" stroke-width="1.15" fill="none"/></svg>
<svg class="ov" style="left:832px;top:486px" width="8" height="18" viewBox="0 0 8 18"><rect x="3" y="6" width="2" height="2" fill="#2e3440"/><path d="M3.2 9.2 L4.9 4.5" stroke="#cf6770" stroke-width="1.15" fill="none"/></svg>
<svg class="ov" style="left:24px;top:522px" width="8" height="18" viewBox="0 0 8 18"><rect x="3" y="6" width="2" height="2" fill="#2e3440"/><path d="M3.2 9.2 L4.9 4.5" stroke="#e5e9f0" stroke-width="1.15" fill="none"/></svg>
<svg class="ov" style="left:112px;top:522px" width="8" height="18" viewBox="0 0 8 18"><rect x="3" y="6" width="2" height="2" fill="#2e3440"/><path d="M3.2 9.2 L4.9 4.5" stroke="#e5e9f0" stroke-width="1.15" fill="none"/></svg>
<svg class="ov" style="left:128px;top:522px" width="8" height="18" viewBox="0 0 8 18"><rect x="3" y="6" width="2" height="2" fill="#2e3440"/><path d="M3.2 9.2 L4.9 4.5" stroke="#e5e9f0" stroke-width="1.15" fill="none"/></svg>
<svg class="ov" style="left:616px;top:522px" width="8" height="18" viewBox="0 0 8 18"><rect x="3" y="6" width="2" height="2" fill="#2e3440"/><path d="M3.2 9.2 L4.9 4.5" stroke="#a38cf2" stroke-width="1.15" fill="none"/></svg>
<svg class="ov" style="left:24px;top:540px" width="8" height="18" viewBox="0 0 8 18"><rect x="3" y="6" width="2" height="2" fill="#2e3440"/><path d="M3.2 9.2 L4.9 4.5" stroke="#e5e9f0" stroke-width="1.15" fill="none"/></svg>
<svg class="ov" style="left:112px;top:540px" width="8" height="18" viewBox="0 0 8 18"><rect x="3" y="6" width="2" height="2" fill="#2e3440"/><path d="M3.2 9.2 L4.9 4.5" stroke="#e5e9f0" stroke-width="1.15" fill="none"/></svg>
<svg class="ov" style="left:616px;top:540px" width="8" height="18" viewBox="0 0 8 18"><rect x="3" y="6" width="2" height="2" fill="#2e3440"/><path d="M3.2 9.2 L4.9 4.5" stroke="#a38cf2" stroke-width="1.15" fill="none"/></svg>
<svg class="ov" style="left:24px;top:576px" width="8" height="18" viewBox="0 0 8 18"><rect x="3" y="6" width="2" height="2" fill="#2e3440"/><path d="M3.2 9.2 L4.9 4.5" stroke="#e5e9f0" stroke-width="1.15" fill="none"/></svg>
<svg class="ov" style="left:128px;top:576px" width="8" height="18" viewBox="0 0 8 18"><rect x="3" y="6" width="2" height="2" fill="#2e3440"/><path d="M3.2 9.2 L4.9 4.5" stroke="#e5e9f0" stroke-width="1.15" fill="none"/></svg>
<svg class="ov" style="left:24px;top:594px" width="8" height="18" viewBox="0 0 8 18"><rect x="3" y="6" width="2" height="2" fill="#2e3440"/><path d="M3.2 9.2 L4.9 4.5" stroke="#e5e9f0" stroke-width="1.15" fill="none"/></svg>
<svg class="ov" style="left:24px;top:612px" width="8" height="18" viewBox="0 0 8 18"><rect x="3" y="6" width="2" height="2" fill="#2e3440"/><path d="M3.2 9.2 L4.9 4.5" stroke="#e5e9f0" stroke-width="1.15" fill="none"/></svg>
<svg class="ov" style="left:520px;top:612px" width="8" height="18" viewBox="0 0 8 18"><rect x="3" y="6" width="2" height="2" fill="#2e3440"/><path d="M3.2 9.2 L4.9 4.5" stroke="#a38cf2" stroke-width="1.15" fill="none"/></svg>
<svg class="ov" style="left:656px;top:612px" width="8" height="18" viewBox="0 0 8 18"><rect x="3" y="6" width="2" height="2" fill="#2e3440"/><path d="M3.2 9.2 L4.9 4.5" stroke="#a38cf2" stroke-width="1.15" fill="none"/></svg>
<svg class="ov" style="left:24px;top:630px" width="8" height="18" viewBox="0 0 8 18"><rect x="3" y="6" width="2" height="2" fill="#2e3440"/><path d="M3.2 9.2 L4.9 4.5" stroke="#e5e9f0" stroke-width="1.15" fill="none"/></svg>
<svg class="ov" style="left:656px;top:630px" width="8" height="18" viewBox="0 0 8 18"><rect x="3" y="6" width="2" height="2" fill="#2e3440"/><path d="M3.2 9.2 L4.9 4.5" stroke="#a38cf2" stroke-width="1.15" fill="none"/></svg>
<svg class="ov" style="left:24px;top:648px" width="8" height="18" viewBox="0 0 8 18"><rect x="3" y="6" width="2" height="2" fill="#2e3440"/><path d="M3.2 9.2 L4.9 4.5" stroke="#e5e9f0" stroke-width="1.15" fill="none"/></svg>
<svg class="ov" style="left:24px;top:666px" width="8" height="18" viewBox="0 0 8 18"><rect x="3" y="6" width="2" height="2" fill="#2e3440"/><path d="M3.2 9.2 L4.9 4.5" stroke="#e5e9f0" stroke-width="1.15" fill="none"/></svg>
<svg class="ov" style="left:0px;top:702px" width="8" height="18" viewBox="0 0 8 18"><rect x="3" y="6" width="2" height="2" fill="#2e3440"/><path d="M3.2 9.2 L4.9 4.5" stroke="#e5e9f0" stroke-width="1.15" fill="none"/></svg>
<svg class="ov" style="left:8px;top:702px" width="8" height="18" viewBox="0 0 8 18"><rect x="3" y="6" width="2" height="2" fill="#2e3440"/><path d="M3.2 9.2 L4.9 4.5" stroke="#e5e9f0" stroke-width="1.15" fill="none"/></svg>
<svg class="ov" style="left:24px;top:702px" width="8" height="18" viewBox="0 0 8 18"><rect x="3" y="6" width="2" height="2" fill="#2e3440"/><path d="M3.2 9.2 L4.9 4.5" stroke="#e5e9f0" stroke-width="1.15" fill="none"/></svg>
<svg class="ov" style="left:32px;top:702px" width="8" height="18" viewBox="0 0 8 18"><rect x="3" y="6" width="2" height="2" fill="#2e3440"/><path d="M3.2 9.2 L4.9 4.5" stroke="#e5e9f0" stroke-width="1.15" fill="none"/></svg>
<svg class="ov" style="left:40px;top:702px" width="8" height="18" viewBox="0 0 8 18"><rect x="3" y="6" width="2" height="2" fill="#2e3440"/><path d="M3.2 9.2 L4.9 4.5" stroke="#e5e9f0" stroke-width="1.15" fill="none"/></svg>
<svg class="ov" style="left:48px;top:702px" width="8" height="18" viewBox="0 0 8 18"><rect x="3" y="6" width="2" height="2" fill="#2e3440"/><path d="M3.2 9.2 L4.9 4.5" stroke="#e5e9f0" stroke-width="1.15" fill="none"/></svg>
<svg class="ov" style="left:104px;top:702px" width="8" height="18" viewBox="0 0 8 18"><rect x="3" y="6" width="2" height="2" fill="#2e3440"/><path d="M3.2 9.2 L4.9 4.5" stroke="#ebcb8b" stroke-width="1.15" fill="none"/></svg>
<svg class="ov" style="left:248px;top:702px" width="8" height="18" viewBox="0 0 8 18"><rect x="3" y="6" width="2" height="2" fill="#2e3440"/><path d="M3.2 9.2 L4.9 4.5" stroke="#cf6770" stroke-width="1.15" fill="none"/></svg>
<svg class="ov" style="left:424px;top:702px" width="8" height="18" viewBox="0 0 8 18"><rect x="3" y="6" width="2" height="2" fill="#2e3440"/><path d="M3.2 9.2 L4.9 4.5" stroke="#cf6770" stroke-width="1.15" fill="none"/></svg>
<svg class="ov" style="left:544px;top:702px" width="8" height="18" viewBox="0 0 8 18"><rect x="3" y="6" width="2" height="2" fill="#2e3440"/><path d="M3.2 9.2 L4.9 4.5" stroke="#a38cf2" stroke-width="1.15" fill="none"/></svg>
<svg class="ov" style="left:0px;top:720px" width="8" height="18" viewBox="0 0 8 18"><rect x="3" y="6" width="2" height="2" fill="#2e3440"/><path d="M3.2 9.2 L4.9 4.5" stroke="#e5e9f0" stroke-width="1.15" fill="none"/></svg>
<svg class="ov" style="left:24px;top:720px" width="8" height="18" viewBox="0 0 8 18"><rect x="3" y="6" width="2" height="2" fill="#2e3440"/><path d="M3.2 9.2 L4.9 4.5" stroke="#e5e9f0" stroke-width="1.15" fill="none"/></svg>
<svg class="ov" style="left:32px;top:720px" width="8" height="18" viewBox="0 0 8 18"><rect x="3" y="6" width="2" height="2" fill="#2e3440"/><path d="M3.2 9.2 L4.9 4.5" stroke="#e5e9f0" stroke-width="1.15" fill="none"/></svg>
<svg class="ov" style="left:40px;top:720px" width="8" height="18" viewBox="0 0 8 18"><rect x="3" y="6" width="2" height="2" fill="#2e3440"/><path d="M3.2 9.2 L4.9 4.5" stroke="#e5e9f0" stroke-width="1.15" fill="none"/></svg>
<svg class="ov" style="left:104px;top:720px" width="8" height="18" viewBox="0 0 8 18"><rect x="3" y="6" width="2" height="2" fill="#2e3440"/><path d="M3.2 9.2 L4.9 4.5" stroke="#ebcb8b" stroke-width="1.15" fill="none"/></svg>
<svg class="ov" style="left:208px;top:720px" width="8" height="18" viewBox="0 0 8 18"><rect x="3" y="6" width="2" height="2" fill="#2e3440"/><path d="M3.2 9.2 L4.9 4.5" stroke="#ebcb8b" stroke-width="1.15" fill="none"/></svg>
<svg class="ov" style="left:248px;top:720px" width="8" height="18" viewBox="0 0 8 18"><rect x="3" y="6" width="2" height="2" fill="#2e3440"/><path d="M3.2 9.2 L4.9 4.5" stroke="#ebcb8b" stroke-width="1.15" fill="none"/></svg>
<svg class="ov" style="left:392px;top:720px" width="8" height="18" viewBox="0 0 8 18"><rect x="3" y="6" width="2" height="2" fill="#2e3440"/><path d="M3.2 9.2 L4.9 4.5" stroke="#ebcb8b" stroke-width="1.15" fill="none"/></svg>
<svg class="ov" style="left:0px;top:738px" width="8" height="18" viewBox="0 0 8 18"><rect x="3" y="6" width="2" height="2" fill="#2e3440"/><path d="M3.2 9.2 L4.9 4.5" stroke="#e5e9f0" stroke-width="1.15" fill="none"/></svg>
<svg class="ov" style="left:24px;top:738px" width="8" height="18" viewBox="0 0 8 18"><rect x="3" y="6" width="2" height="2" fill="#2e3440"/><path d="M3.2 9.2 L4.9 4.5" stroke="#e5e9f0" stroke-width="1.15" fill="none"/></svg>
<svg class="ov" style="left:32px;top:738px" width="8" height="18" viewBox="0 0 8 18"><rect x="3" y="6" width="2" height="2" fill="#2e3440"/><path d="M3.2 9.2 L4.9 4.5" stroke="#e5e9f0" stroke-width="1.15" fill="none"/></svg>
<svg class="ov" style="left:48px;top:738px" width="8" height="18" viewBox="0 0 8 18"><rect x="3" y="6" width="2" height="2" fill="#2e3440"/><path d="M3.2 9.2 L4.9 4.5" stroke="#e5e9f0" stroke-width="1.15" fill="none"/></svg>
<svg class="ov" style="left:104px;top:738px" width="8" height="18" viewBox="0 0 8 18"><rect x="3" y="6" width="2" height="2" fill="#2e3440"/><path d="M3.2 9.2 L4.9 4.5" stroke="#ebcb8b" stroke-width="1.15" fill="none"/></svg>
<svg class="ov" style="left:248px;top:738px" width="8" height="18" viewBox="0 0 8 18"><rect x="3" y="6" width="2" height="2" fill="#2e3440"/><path d="M3.2 9.2 L4.9 4.5" stroke="#e5e9f0" stroke-width="1.15" fill="none"/></svg>
<svg class="ov" style="left:328px;top:738px" width="8" height="18" viewBox="0 0 8 18"><rect x="3" y="6" width="2" height="2" fill="#2e3440"/><path d="M3.2 9.2 L4.9 4.5" stroke="#e5e9f0" stroke-width="1.15" fill="none"/></svg>
<svg class="ov" style="left:0px;top:756px" width="8" height="18" viewBox="0 0 8 18"><rect x="3" y="6" width="2" height="2" fill="#2e3440"/><path d="M3.2 9.2 L4.9 4.5" stroke="#e5e9f0" stroke-width="1.15" fill="none"/></svg>
<svg class="ov" style="left:24px;top:756px" width="8" height="18" viewBox="0 0 8 18"><rect x="3" y="6" width="2" height="2" fill="#2e3440"/><path d="M3.2 9.2 L4.9 4.5" stroke="#e5e9f0" stroke-width="1.15" fill="none"/></svg>
<svg class="ov" style="left:32px;top:756px" width="8" height="18" viewBox="0 0 8 18"><rect x="3" y="6" width="2" height="2" fill="#2e3440"/><path d="M3.2 9.2 L4.9 4.5" stroke="#e5e9f0" stroke-width="1.15" fill="none"/></svg>
<svg class="ov" style="left:104px;top:756px" width="8" height="18" viewBox="0 0 8 18"><rect x="3" y="6" width="2" height="2" fill="#2e3440"/><path d="M3.2 9.2 L4.9 4.5" stroke="#ebcb8b" stroke-width="1.15" fill="none"/></svg>
<svg class="ov" style="left:208px;top:756px" width="8" height="18" viewBox="0 0 8 18"><rect x="3" y="6" width="2" height="2" fill="#2e3440"/><path d="M3.2 9.2 L4.9 4.5" stroke="#ebcb8b" stroke-width="1.15" fill="none"/></svg>
<svg class="ov" style="left:248px;top:756px" width="8" height="18" viewBox="0 0 8 18"><rect x="3" y="6" width="2" height="2" fill="#2e3440"/><path d="M3.2 9.2 L4.9 4.5" stroke="#e5e9f0" stroke-width="1.15" fill="none"/></svg>
<svg class="ov" style="left:0px;top:774px" width="8" height="18" viewBox="0 0 8 18"><rect x="3" y="6" width="2" height="2" fill="#2e3440"/><path d="M3.2 9.2 L4.9 4.5" stroke="#e5e9f0" stroke-width="1.15" fill="none"/></svg>
<svg class="ov" style="left:24px;top:774px" width="8" height="18" viewBox="0 0 8 18"><rect x="3" y="6" width="2" height="2" fill="#2e3440"/><path d="M3.2 9.2 L4.9 4.5" stroke="#e5e9f0" stroke-width="1.15" fill="none"/></svg>
<svg class="ov" style="left:32px;top:774px" width="8" height="18" viewBox="0 0 8 18"><rect x="3" y="6" width="2" height="2" fill="#2e3440"/><path d="M3.2 9.2 L4.9 4.5" stroke="#e5e9f0" stroke-width="1.15" fill="none"/></svg>
<svg class="ov" style="left:48px;top:774px" width="8" height="18" viewBox="0 0 8 18"><rect x="3" y="6" width="2" height="2" fill="#2e3440"/><path d="M3.2 9.2 L4.9 4.5" stroke="#e5e9f0" stroke-width="1.15" fill="none"/></svg>
<svg class="ov" style="left:104px;top:774px" width="8" height="18" viewBox="0 0 8 18"><rect x="3" y="6" width="2" height="2" fill="#2e3440"/><path d="M3.2 9.2 L4.9 4.5" stroke="#ebcb8b" stroke-width="1.15" fill="none"/></svg>
<svg class="ov" style="left:248px;top:774px" width="8" height="18" viewBox="0 0 8 18"><rect x="3" y="6" width="2" height="2" fill="#2e3440"/><path d="M3.2 9.2 L4.9 4.5" stroke="#cf6770" stroke-width="1.15" fill="none"/></svg>
<svg class="ov" style="left:0px;top:792px" width="8" height="18" viewBox="0 0 8 18"><rect x="3" y="6" width="2" height="2" fill="#2e3440"/><path d="M3.2 9.2 L4.9 4.5" stroke="#e5e9f0" stroke-width="1.15" fill="none"/></svg>
<svg class="ov" style="left:24px;top:792px" width="8" height="18" viewBox="0 0 8 18"><rect x="3" y="6" width="2" height="2" fill="#2e3440"/><path d="M3.2 9.2 L4.9 4.5" stroke="#e5e9f0" stroke-width="1.15" fill="none"/></svg>
<svg class="ov" style="left:32px;top:792px" width="8" height="18" viewBox="0 0 8 18"><rect x="3" y="6" width="2" height="2" fill="#2e3440"/><path d="M3.2 9.2 L4.9 4.5" stroke="#e5e9f0" stroke-width="1.15" fill="none"/></svg>
<svg class="ov" style="left:104px;top:792px" width="8" height="18" viewBox="0 0 8 18"><rect x="3" y="6" width="2" height="2" fill="#2e3440"/><path d="M3.2 9.2 L4.9 4.5" stroke="#ebcb8b" stroke-width="1.15" fill="none"/></svg>
<svg class="ov" style="left:208px;top:792px" width="8" height="18" viewBox="0 0 8 18"><rect x="3" y="6" width="2" height="2" fill="#2e3440"/><path d="M3.2 9.2 L4.9 4.5" stroke="#ebcb8b" stroke-width="1.15" fill="none"/></svg>
<svg class="ov" style="left:248px;top:792px" width="8" height="18" viewBox="0 0 8 18"><rect x="3" y="6" width="2" height="2" fill="#2e3440"/><path d="M3.2 9.2 L4.9 4.5" stroke="#ebcb8b" stroke-width="1.15" fill="none"/></svg>
<svg class="ov" style="left:352px;top:792px" width="8" height="18" viewBox="0 0 8 18"><rect x="3" y="6" width="2" height="2" fill="#2e3440"/><path d="M3.2 9.2 L4.9 4.5" stroke="#ebcb8b" stroke-width="1.15" fill="none"/></svg>
<svg class="ov" style="left:392px;top:792px" width="8" height="18" viewBox="0 0 8 18"><rect x="3" y="6" width="2" height="2" fill="#2e3440"/><path d="M3.2 9.2 L4.9 4.5" stroke="#ebcb8b" stroke-width="1.15" fill="none"/></svg>
<svg class="ov" style="left:536px;top:792px" width="8" height="18" viewBox="0 0 8 18"><rect x="3" y="6" width="2" height="2" fill="#2e3440"/><path d="M3.2 9.2 L4.9 4.5" stroke="#e5e9f0" stroke-width="1.15" fill="none"/></svg>
<svg class="ov" style="left:0px;top:810px" width="8" height="18" viewBox="0 0 8 18"><rect x="3" y="6" width="2" height="2" fill="#2e3440"/><path d="M3.2 9.2 L4.9 4.5" stroke="#e5e9f0" stroke-width="1.15" fill="none"/></svg>
<svg class="ov" style="left:24px;top:810px" width="8" height="18" viewBox="0 0 8 18"><rect x="3" y="6" width="2" height="2" fill="#2e3440"/><path d="M3.2 9.2 L4.9 4.5" stroke="#e5e9f0" stroke-width="1.15" fill="none"/></svg>
<svg class="ov" style="left:32px;top:810px" width="8" height="18" viewBox="0 0 8 18"><rect x="3" y="6" width="2" height="2" fill="#2e3440"/><path d="M3.2 9.2 L4.9 4.5" stroke="#e5e9f0" stroke-width="1.15" fill="none"/></svg>
<svg class="ov" style="left:48px;top:810px" width="8" height="18" viewBox="0 0 8 18"><rect x="3" y="6" width="2" height="2" fill="#2e3440"/><path d="M3.2 9.2 L4.9 4.5" stroke="#e5e9f0" stroke-width="1.15" fill="none"/></svg>
<svg class="ov" style="left:104px;top:810px" width="8" height="18" viewBox="0 0 8 18"><rect x="3" y="6" width="2" height="2" fill="#2e3440"/><path d="M3.2 9.2 L4.9 4.5" stroke="#ebcb8b" stroke-width="1.15" fill="none"/></svg>
<svg class="ov" style="left:248px;top:810px" width="8" height="18" viewBox="0 0 8 18"><rect x="3" y="6" width="2" height="2" fill="#2e3440"/><path d="M3.2 9.2 L4.9 4.5" stroke="#cf6770" stroke-width="1.15" fill="none"/></svg>
<svg class="ov" style="left:0px;top:828px" width="8" height="18" viewBox="0 0 8 18"><rect x="3" y="6" width="2" height="2" fill="#2e3440"/><path d="M3.2 9.2 L4.9 4.5" stroke="#e5e9f0" stroke-width="1.15" fill="none"/></svg>
<svg class="ov" style="left:24px;top:828px" width="8" height="18" viewBox="0 0 8 18"><rect x="3" y="6" width="2" height="2" fill="#2e3440"/><path d="M3.2 9.2 L4.9 4.5" stroke="#e5e9f0" stroke-width="1.15" fill="none"/></svg>
<svg class="ov" style="left:32px;top:828px" width="8" height="18" viewBox="0 0 8 18"><rect x="3" y="6" width="2" height="2" fill="#2e3440"/><path d="M3.2 9.2 L4.9 4.5" stroke="#e5e9f0" stroke-width="1.15" fill="none"/></svg>
<svg class="ov" style="left:104px;top:828px" width="8" height="18" viewBox="0 0 8 18"><rect x="3" y="6" width="2" height="2" fill="#2e3440"/><path d="M3.2 9.2 L4.9 4.5" stroke="#ebcb8b" stroke-width="1.15" fill="none"/></svg>
<svg class="ov" style="left:208px;top:828px" width="8" height="18" viewBox="0 0 8 18"><rect x="3" y="6" width="2" height="2" fill="#2e3440"/><path d="M3.2 9.2 L4.9 4.5" stroke="#ebcb8b" stroke-width="1.15" fill="none"/></svg>
<svg class="ov" style="left:248px;top:828px" width="8" height="18" viewBox="0 0 8 18"><rect x="3" y="6" width="2" height="2" fill="#2e3440"/><path d="M3.2 9.2 L4.9 4.5" stroke="#e5e9f0" stroke-width="1.15" fill="none"/></svg>
<svg class="ov" style="left:312px;top:828px" width="8" height="18" viewBox="0 0 8 18"><rect x="3" y="6" width="2" height="2" fill="#2e3440"/><path d="M3.2 9.2 L4.9 4.5" stroke="#e5e9f0" stroke-width="1.15" fill="none"/></svg>
<svg class="ov" style="left:328px;top:828px" width="8" height="18" viewBox="0 0 8 18"><rect x="3" y="6" width="2" height="2" fill="#2e3440"/><path d="M3.2 9.2 L4.9 4.5" stroke="#e5e9f0" stroke-width="1.15" fill="none"/></svg>
<svg class="ov" style="left:24px;top:864px" width="8" height="18" viewBox="0 0 8 18"><rect x="3" y="6" width="2" height="2" fill="#2e3440"/><path d="M3.2 9.2 L4.9 4.5" stroke="#e5e9f0" stroke-width="1.15" fill="none"/></svg>
<svg class="ov" style="left:56px;top:864px" width="8" height="18" viewBox="0 0 8 18"><rect x="3" y="6" width="2" height="2" fill="#2e3440"/><path d="M3.2 9.2 L4.9 4.5" stroke="#e5e9f0" stroke-width="1.15" fill="none"/></svg>
<svg class="ov" style="left:144px;top:864px" width="8" height="18" viewBox="0 0 8 18"><rect x="3" y="6" width="2" height="2" fill="#2e3440"/><path d="M3.2 9.2 L4.9 4.5" stroke="#e5e9f0" stroke-width="1.15" fill="none"/></svg>
<svg class="ov" style="left:160px;top:864px" width="8" height="18" viewBox="0 0 8 18"><rect x="3" y="6" width="2" height="2" fill="#2e3440"/><path d="M3.2 9.2 L4.9 4.5" stroke="#e5e9f0" stroke-width="1.15" fill="none"/></svg>
<svg class="ov" style="left:56px;top:882px" width="8" height="18" viewBox="0 0 8 18"><rect x="3" y="6" width="2" height="2" fill="#2e3440"/><path d="M3.2 9.2 L4.9 4.5" stroke="#e5e9f0" stroke-width="1.15" fill="none"/></svg>
<svg class="ov" style="left:224px;top:882px" width="8" height="18" viewBox="0 0 8 18"><rect x="3" y="6" width="2" height="2" fill="#2e3440"/><path d="M3.2 9.2 L4.9 4.5" stroke="#e5e9f0" stroke-width="1.15" fill="none"/></svg>
<svg class="ov" style="left:56px;top:900px" width="8" height="18" viewBox="0 0 8 18"><rect x="3" y="6" width="2" height="2" fill="#2e3440"/><path d="M3.2 9.2 L4.9 4.5" stroke="#e5e9f0" stroke-width="1.15" fill="none"/></svg>
<svg class="ov" style="left:56px;top:918px" width="8" height="18" viewBox="0 0 8 18"><rect x="3" y="6" width="2" height="2" fill="#2e3440"/><path d="M3.2 9.2 L4.9 4.5" stroke="#e5e9f0" stroke-width="1.15" fill="none"/></svg>
<svg class="ov" style="left:56px;top:936px" width="8" height="18" viewBox="0 0 8 18"><rect x="3" y="6" width="2" height="2" fill="#2e3440"/><path d="M3.2 9.2 L4.9 4.5" stroke="#e5e9f0" stroke-width="1.15" fill="none"/></svg>
<svg class="ov" style="left:144px;top:936px" width="8" height="18" viewBox="0 0 8 18"><rect x="3" y="6" width="2" height="2" fill="#2e3440"/><path d="M3.2 9.2 L4.9 4.5" stroke="#e5e9f0" stroke-width="1.15" fill="none"/></svg>
<div style="position:absolute;left:91px;top:972px;width:2px;height:1px;background:#56657a"></div></body></html>
